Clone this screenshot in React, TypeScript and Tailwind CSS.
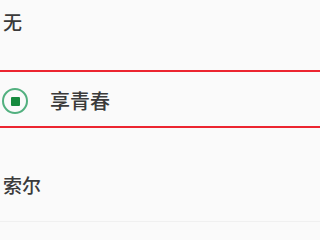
const font = { fontFamily: '"Noto Sans CJK SC", "Noto Sans", sans-serif' };

export default function App() {
  return (
    <div className="w-[320px] h-[240px] overflow-hidden bg-[#fafafa] text-[#3a3a3a]" style={font}>
      <div className="h-[70px] pt-[9px] pl-[3px]">
        <span className="block text-[19px] leading-[26px] font-medium">无</span>
      </div>
      <div className="h-[58px] border-y-2 border-[#ec2530] flex items-center">
        <div className="ml-[2px] mt-[4px] w-[26px] h-[26px] rounded-full border-2 border-[#52b07f] flex items-center justify-center">
          <div className="w-[9px] h-[9px] rounded-[1px] bg-[#168a3e]" />
        </div>
        <span className="ml-[22px] mt-[4px] text-[20px] leading-[26px] font-medium">享青春</span>
      </div>
      <div className="h-[94px] pt-[44px] pl-[3px] border-b border-[#f0f0f0]">
        <span className="block text-[19px] leading-[26px] font-medium">索尔</span>
      </div>
    </div>
  );
}
